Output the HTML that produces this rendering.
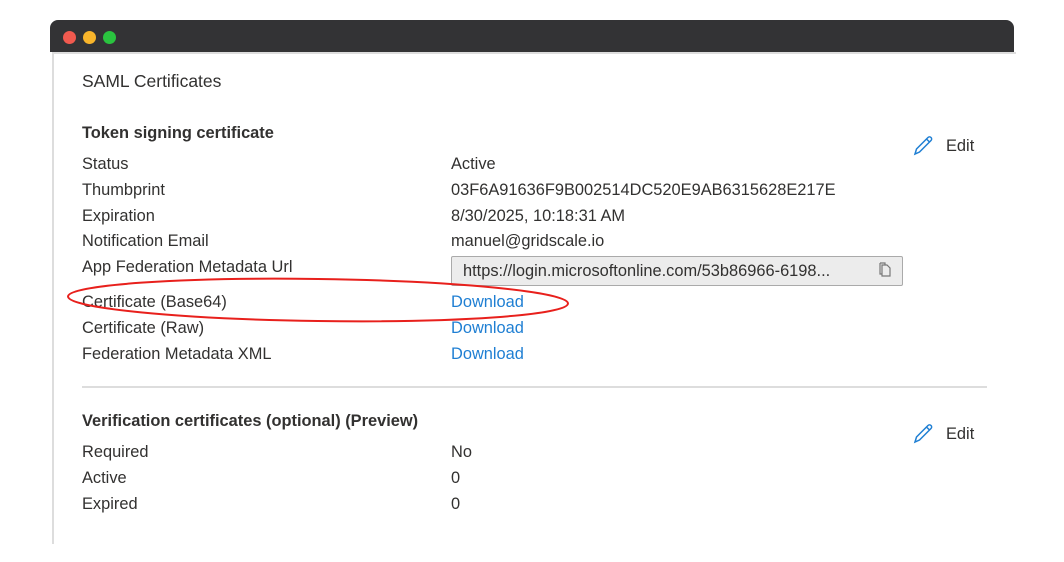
<!DOCTYPE html>
<html><head><style>
body{margin:0;width:1064px;height:562px;background:#fff;position:relative;overflow:hidden;font-family:"Liberation Sans",sans-serif;color:#323130;}
.bar{position:absolute;left:50px;top:20px;width:964px;height:32px;background:#333335;border-radius:8px 8px 0 0;}
.dot{position:absolute;top:31px;width:13px;height:13px;border-radius:50%;}
.win{position:absolute;left:52px;top:52px;width:962px;height:490px;border-left:2px solid #ddd;border-top:2px solid #ddd;}
.t{position:absolute;font-size:16.4px;white-space:nowrap;line-height:20px;}
.b{font-weight:bold;font-size:16.4px;}
.a{color:#1f7fd3;}
.box{position:absolute;left:451px;top:256px;width:450px;height:28px;background:#ececec;border:1px solid #aaa;border-radius:2px;}
.hr{position:absolute;left:82px;top:386px;width:905px;height:2px;background:#ddd;}
</style></head><body>
<div class="bar"></div>
<div class="dot" style="left:63px;background:#f15a4f"></div>
<div class="dot" style="left:83px;background:#f8b52b"></div>
<div class="dot" style="left:103px;background:#2ac33f"></div>
<div class="win"></div>
<div class="t" style="left:82px;top:71px;font-size:17.5px">SAML Certificates</div>
<div class="t b" style="left:82px;top:123px">Token signing certificate</div>
<svg style="position:absolute;left:912px;top:133px" width="24" height="24" viewBox="0 0 24 24"><path d="M3 21l1.5-5L16 4.5a2 2 0 0 1 3 3L7.5 19 3 21zM14.5 6l3 3" fill="none" stroke="#1f7fd3" stroke-width="1.5"/></svg>
<div class="t" style="left:946px;top:136px">Edit</div>
<div class="t" style="left:82px;top:154px">Status</div><div class="t" style="left:451px;top:154px">Active</div>
<div class="t" style="left:82px;top:180px">Thumbprint</div><div class="t" style="left:451px;top:180px">03F6A91636F9B002514DC520E9AB6315628E217E</div>
<div class="t" style="left:82px;top:206px">Expiration</div><div class="t" style="left:451px;top:206px">8/30/2025, 10:18:31 AM</div>
<div class="t" style="left:82px;top:231px">Notification Email</div><div class="t" style="left:451px;top:231px">manuel@gridscale.io</div>
<div class="t" style="left:82px;top:257px">App Federation Metadata Url</div>
<div class="box"></div>
<div class="t" style="left:463px;top:261px">https://login.microsoftonline.com/53b86966-6198...</div>
<svg style="position:absolute;left:877px;top:262px" width="16" height="16" viewBox="0 0 16 16"><path d="M5 3h5l3 3v8H5z M3 1h5v2 M3 1v11h2" fill="none" stroke="#777" stroke-width="1.2"/></svg>
<div class="t" style="left:82px;top:292px">Certificate (Base64)</div><div class="t a" style="left:451px;top:292px">Download</div>
<div class="t" style="left:82px;top:318px">Certificate (Raw)</div><div class="t a" style="left:451px;top:318px">Download</div>
<div class="t" style="left:82px;top:344px">Federation Metadata XML</div><div class="t a" style="left:451px;top:344px">Download</div>
<svg style="position:absolute;left:0;top:0" width="1064" height="562"><ellipse cx="318" cy="300" rx="250" ry="21" transform="rotate(0.8 318 300)" fill="none" stroke="#e8201c" stroke-width="2"/></svg>
<div class="hr"></div>
<div class="t b" style="left:82px;top:411px">Verification certificates (optional) (Preview)</div>
<svg style="position:absolute;left:912px;top:421px" width="24" height="24" viewBox="0 0 24 24"><path d="M3 21l1.5-5L16 4.5a2 2 0 0 1 3 3L7.5 19 3 21zM14.5 6l3 3" fill="none" stroke="#1f7fd3" stroke-width="1.5"/></svg>
<div class="t" style="left:946px;top:424px">Edit</div>
<div class="t" style="left:82px;top:442px">Required</div><div class="t" style="left:451px;top:442px">No</div>
<div class="t" style="left:82px;top:468px">Active</div><div class="t" style="left:451px;top:468px">0</div>
<div class="t" style="left:82px;top:494px">Expired</div><div class="t" style="left:451px;top:494px">0</div>
</body></html>
